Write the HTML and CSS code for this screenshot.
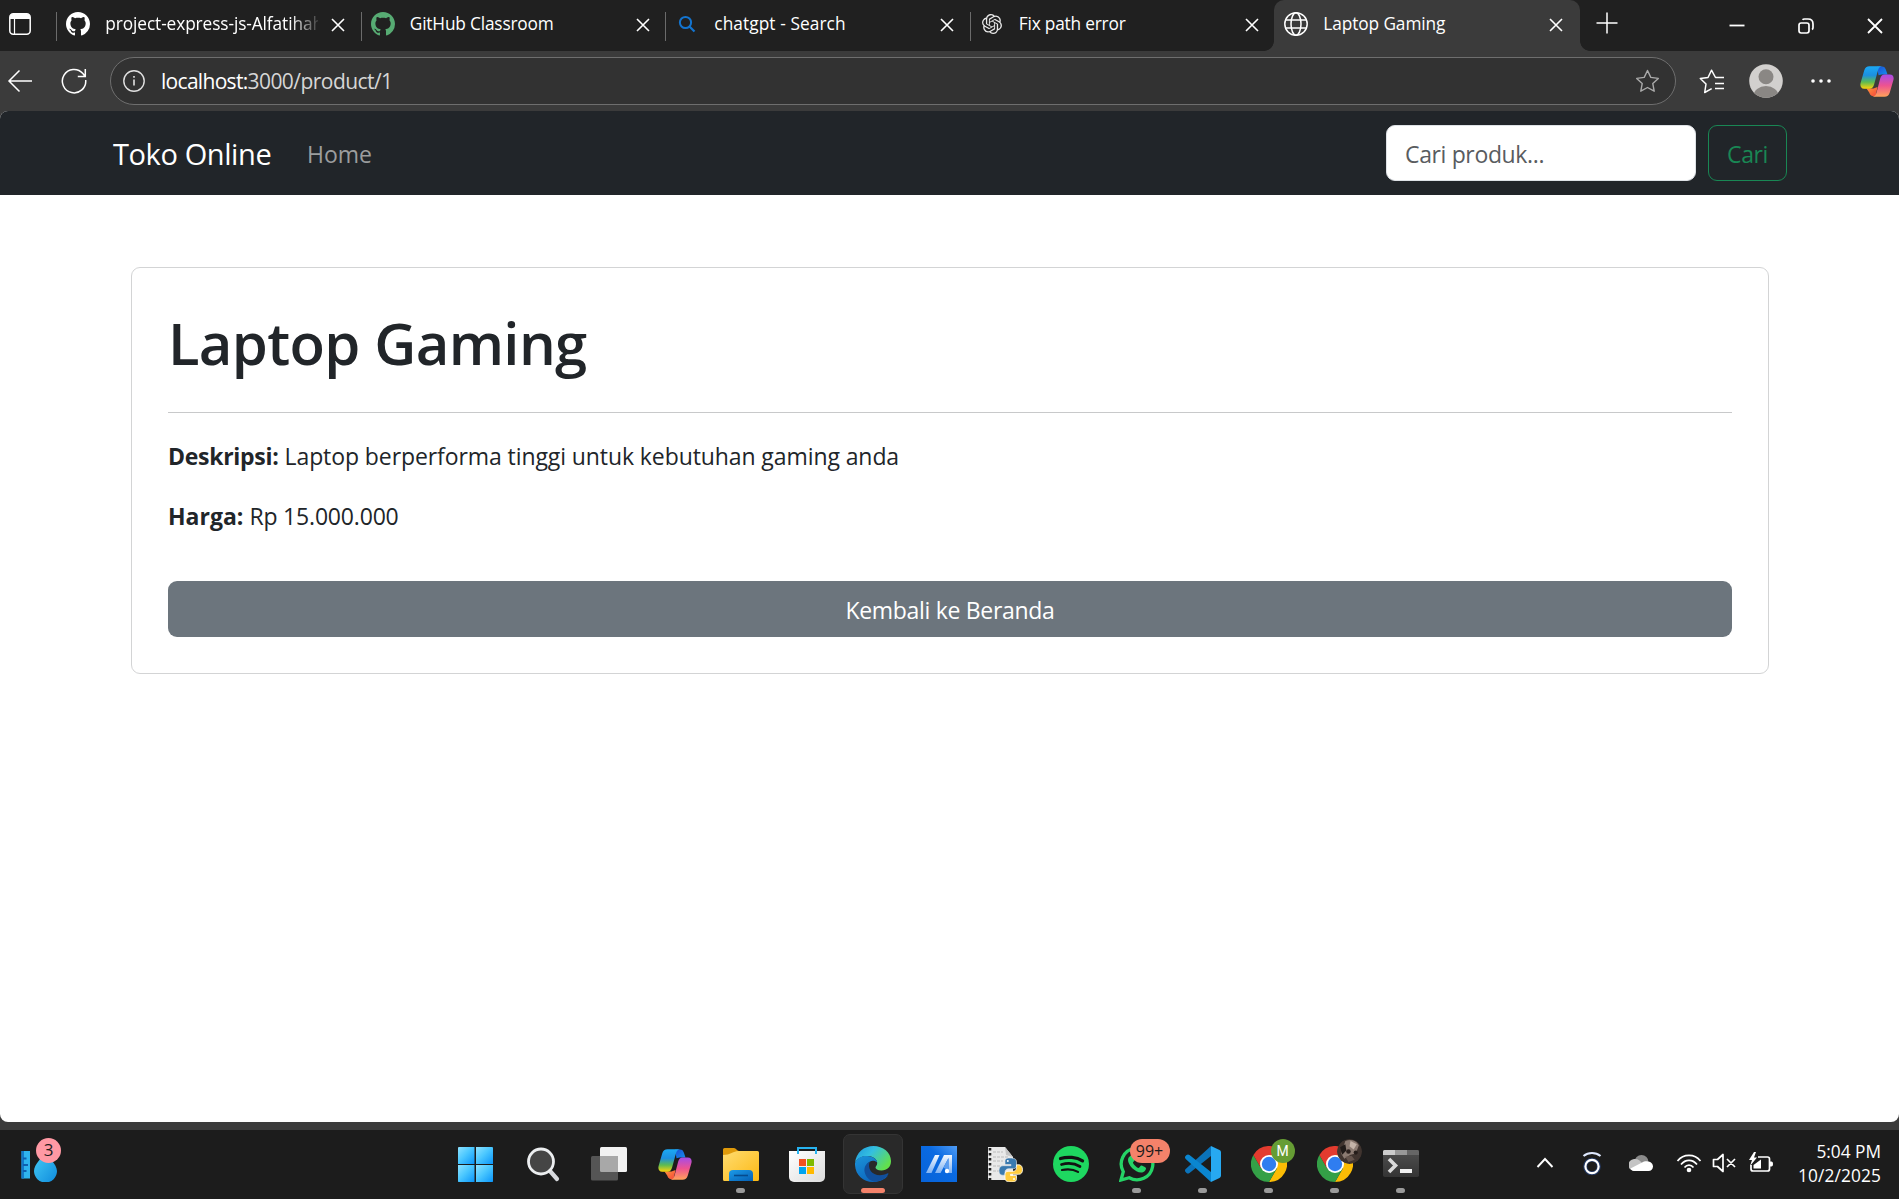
FILE: index.html
```html
<!DOCTYPE html>
<html lang="id">
<head>
<meta charset="utf-8">
<title>Laptop Gaming</title>
<link rel="stylesheet" href="styles.css">
</head>
<body>
<svg width="0" height="0" class="defs" aria-hidden="true">
  <defs>
    <symbol id="github" viewBox="0 0 16 16"><path d="M8 0C3.58 0 0 3.58 0 8c0 3.54 2.29 6.53 5.47 7.59.4.07.55-.17.55-.38 0-.19-.01-.82-.01-1.49-2.01.37-2.53-.49-2.69-.94-.09-.23-.48-.94-.82-1.13-.28-.15-.68-.52-.01-.53.63-.01 1.08.58 1.23.82.72 1.21 1.87.87 2.33.66.07-.52.28-.87.51-1.07-1.78-.2-3.64-.89-3.64-3.95 0-.87.31-1.59.82-2.15-.08-.2-.36-1.02.08-2.12 0 0 .67-.21 2.2.82.64-.18 1.32-.27 2-.27s1.36.09 2 .27c1.53-1.04 2.2-.82 2.2-.82.44 1.1.16 1.92.08 2.12.51.56.82 1.27.82 2.15 0 3.07-1.87 3.75-3.65 3.95.29.25.54.73.54 1.48 0 1.07-.01 1.93-.01 2.2 0 .21.15.46.55.38A8.01 8.01 0 0 0 16 8c0-4.42-3.58-8-8-8z" fill="currentColor"/></symbol>
    <symbol id="close" viewBox="0 0 14 14"><path d="M1 1l12 12M13 1L1 13" stroke="#fff" stroke-width="1.6" fill="none"/></symbol>
    <linearGradient id="cpA" x1="0" y1="0" x2="0" y2="1"><stop offset="0" stop-color="#1ba9f5"/><stop offset=".4" stop-color="#1c8fe0"/><stop offset=".7" stop-color="#5dbb52"/><stop offset="1" stop-color="#ffd30a"/></linearGradient>
    <linearGradient id="cpB" x1="0" y1="0" x2="0" y2="1"><stop offset="0" stop-color="#a64be8"/><stop offset=".5" stop-color="#ee5390"/><stop offset="1" stop-color="#ffa25a"/></linearGradient>
    <linearGradient id="cpC" x1="0" y1="0" x2="1" y2="1"><stop offset="0" stop-color="#1b4fd6"/><stop offset="1" stop-color="#1590ee"/></linearGradient>
    <linearGradient id="cpD" x1="0" y1="0" x2="1" y2="1"><stop offset="0" stop-color="#ff9a3c"/><stop offset="1" stop-color="#f4433c"/></linearGradient>
    <symbol id="copilot" viewBox="0 0 34 31">
      <path d="M17 .5h5c2.200 0 3.200 1.200 3.900 3.300L27.500 8.500h-6l-3 .8z" fill="url(#cpC)"/>
      <path d="M6.500 22.500h7l4-1.500-2 9.500c-3 0-5.500-1-6.300-4z" fill="url(#cpD)"/>
      <path d="M9.500.3H22c-2.400.2-3.300 1.700-4 4L14 18.800c-.9 2.900-2 4-4.600 4H4.200C1 22.800-.2 20.200.6 17L4.200 4.500C5.200 1.500 6.700.3 9.500.3z" fill="url(#cpA)"/>
      <path d="M24.500 30.700H12.500c2.300-.2 3.300-1.700 4-4L20.200 12.500c.9-2.900 2-4 4.600-4h5c3.200 0 4.400 2.400 3.600 5.600L29.800 26.500c-1 3-2.500 4.200-5.300 4.200z" fill="url(#cpB)"/>
    </symbol>
    <linearGradient id="win" x1="0" y1="0" x2="1" y2="1"><stop offset="0" stop-color="#8ee2ff"/><stop offset=".45" stop-color="#4cc8ff"/><stop offset="1" stop-color="#0a95fa"/></linearGradient>
    <linearGradient id="folder" x1="0" y1="0" x2="1" y2="1"><stop offset="0" stop-color="#ffdc70"/><stop offset="1" stop-color="#fcb914"/></linearGradient>
    <linearGradient id="dock" x1="0" y1="0" x2="1" y2="1"><stop offset="0" stop-color="#1c9be8"/><stop offset="1" stop-color="#0560b5"/></linearGradient>
    <linearGradient id="bag" x1="0" y1="0" x2="1" y2="1"><stop offset="0" stop-color="#fff"/><stop offset="1" stop-color="#dcdcdc"/></linearGradient>
    <linearGradient id="edgeTop" x1="0" y1="0" x2="1" y2=".6"><stop offset="0" stop-color="#1e96dd"/><stop offset=".45" stop-color="#34bfe0"/><stop offset="1" stop-color="#62e04c"/></linearGradient>
    <linearGradient id="edgeLeft" x1="0" y1="0" x2=".6" y2="1"><stop offset="0" stop-color="#1b93d8"/><stop offset="1" stop-color="#0c64bd"/></linearGradient>
    <linearGradient id="drop" x1="0" y1="0" x2="1" y2="1"><stop offset="0" stop-color="#45cdf7"/><stop offset="1" stop-color="#0f8bdc"/></linearGradient>
    <linearGradient id="app" x1="0" y1="1" x2="1" y2="0"><stop offset="0" stop-color="#0763d9"/><stop offset=".6" stop-color="#0a6ae2"/><stop offset="1" stop-color="#4f9cf5"/></linearGradient>
    <linearGradient id="slash" x1="0" y1="1" x2="0" y2="0"><stop offset="0" stop-color="#7fb2f3"/><stop offset="1" stop-color="#f2f8ff"/></linearGradient>
    <linearGradient id="term" x1="0" y1="0" x2="0" y2="1"><stop offset="0" stop-color="#505050"/><stop offset="1" stop-color="#343434"/></linearGradient>
    <symbol id="chrome" viewBox="0 0 36 36">
      <path d="M18 9h15.600A18 18 0 0 1 18 36l7.800-13.500z" fill="#fbbc05"/>
      <path d="M10.200 22.500L2.400 9A18 18 0 0 0 18 36l7.800-13.500z" fill="#34a047"/>
      <path d="M18 9h15.600A18 18 0 0 0 2.400 9l7.800 13.500z" fill="#e33b2e"/>
      <circle cx="18" cy="18" r="9" fill="#fff"/><circle cx="18" cy="18" r="7.200" fill="#2f7df0"/>
    </symbol>
  </defs>
</svg>

<header class="tabstrip">
  <div class="tab-actions"><svg width="22" height="22" viewBox="0 0 22 22"><rect x=".8" y=".8" width="20.400" height="20.400" rx="3.500" fill="none" stroke="#fff" stroke-width="1.500"/><path d="M1 6V4a3 3 0 0 1 3-3h14a3 3 0 0 1 3 3v2z" fill="#fff"/><path d="M5.500 6v15" stroke="#fff" stroke-width="1.200"/></svg></div>
  <div class="tab"><svg class="fav" viewBox="0 0 16 16"><use href="#github"/></svg><span class="title fade">project-express-js-Alfatihah</span><svg class="x"><use href="#close"/></svg></div>
  <div class="tab"><svg class="fav green" viewBox="0 0 16 16"><use href="#github"/></svg><span class="title t2">GitHub Classroom</span><svg class="x"><use href="#close"/></svg></div>
  <div class="tab"><svg class="fav" viewBox="0 0 24 24"><circle cx="10.500" cy="10.500" r="5.600" fill="none" stroke="#1374cf" stroke-width="2"/><path d="M14.500 14.500l5 5" stroke="#1374cf" stroke-width="2.200"/></svg><span class="title t3">chatgpt - Search</span><svg class="x"><use href="#close"/></svg></div>
  <div class="tab"><svg class="fav" viewBox="-2.400 -2.400 28.800 28.800"><path fill="#e8e8e8" d="M22.2819 9.8211a5.9847 5.9847 0 0 0-.5157-4.9108 6.0462 6.0462 0 0 0-6.5098-2.9A6.0651 6.0651 0 0 0 4.9807 4.1818a5.9847 5.9847 0 0 0-3.9977 2.9 6.0462 6.0462 0 0 0 .7427 7.0966 5.98 5.98 0 0 0 .511 4.9107 6.051 6.051 0 0 0 6.5146 2.9001A5.9847 5.9847 0 0 0 13.2599 24a6.0557 6.0557 0 0 0 5.7718-4.2058 5.9894 5.9894 0 0 0 3.9977-2.9001 6.0557 6.0557 0 0 0-.7475-7.0729zm-9.022 12.6081a4.4755 4.4755 0 0 1-2.8764-1.0408l.1419-.0804 4.7783-2.7582a.7948.7948 0 0 0 .3927-.6813v-6.7369l2.02 1.1686a.071.071 0 0 1 .038.052v5.5826a4.504 4.504 0 0 1-4.4945 4.4944zm-9.6607-4.1254a4.4708 4.4708 0 0 1-.5346-3.0137l.142.0852 4.783 2.7582a.7712.7712 0 0 0 .7806 0l5.8428-3.3685v2.3324a.0804.0804 0 0 1-.0332.0615L9.74 19.9502a4.4992 4.4992 0 0 1-6.1408-1.6464zM2.3408 7.8956a4.485 4.485 0 0 1 2.3655-1.9728V11.6a.7664.7664 0 0 0 .3879.6765l5.8144 3.3543-2.0201 1.1685a.0757.0757 0 0 1-.071 0l-4.8303-2.7865A4.504 4.504 0 0 1 2.3408 7.872zm16.5963 3.8558L13.1038 8.364 15.1192 7.2a.0757.0757 0 0 1 .071 0l4.8303 2.7913a4.4944 4.4944 0 0 1-.6765 8.1042v-5.6772a.79.79 0 0 0-.407-.667zm2.0107-3.0231l-.142-.0852-4.7735-2.7818a.7759.7759 0 0 0-.7854 0L9.409 9.2297V6.8974a.0662.0662 0 0 1 .0284-.0615l4.8303-2.7866a4.4992 4.4992 0 0 1 6.6802 4.66zM8.3065 12.863l-2.02-1.1638a.0804.0804 0 0 1-.038-.0567V6.0742a4.4992 4.4992 0 0 1 7.3757-3.4537l-.142.0805L8.704 5.459a.7948.7948 0 0 0-.3927.6813zm1.0976-2.3654l2.602-1.4998 2.6069 1.4998v2.9994l-2.5974 1.4997-2.6067-1.4997Z"/></svg><span class="title t4">Fix path error</span><svg class="x"><use href="#close"/></svg></div>
  <div class="tab active"><svg class="fav" viewBox="0 0 24 24"><g fill="none" stroke="#fff" stroke-width="1.500"><circle cx="12" cy="12" r="11.200"/><ellipse cx="12" cy="12" rx="5" ry="11.200"/><path d="M1.800 8h20.400M1.800 16h20.400"/></g></svg><span class="title t5">Laptop Gaming</span><svg class="x"><use href="#close"/></svg></div>
  <svg class="plus" width="22" height="22" viewBox="0 0 22 22"><path d="M11 .5v21M.5 11h21" stroke="#fff" stroke-width="1.500"/></svg>
  <div class="window-buttons">
    <svg width="16" height="16" viewBox="0 0 16 16"><path d="M.5 7.500h15" stroke="#fff" stroke-width="1.800"/></svg>
    <svg width="16" height="16" viewBox="0 0 16 16"><g fill="none" stroke="#fff" stroke-width="1.700"><rect x="1" y="5" width="10" height="10" rx="2.200"/><path d="M4.500 1.800C5 1.200 5.500 1 6.500 1H10c3 0 5 2 5 5v3.500c0 1-.3 1.600-1 2"/></g></svg>
    <svg width="16" height="16" viewBox="0 0 16 16"><path d="M1 1l14 14M15 1L1 15" stroke="#fff" stroke-width="1.800"/></svg>
  </div>
</header>

<div class="toolbar">
  <svg class="back" width="26" height="24" viewBox="0 0 26 24"><path d="M12.500 1.500L2 12l10.500 10.500M2 12h23" fill="none" stroke="#fff" stroke-width="1.500"/></svg>
  <svg class="reload" width="26" height="26" viewBox="0 0 26 26"><path d="M24.700 12a11.700 11.700 0 1 1-2.800-6.500L24 8.200M24.300 1v7.500h-7.500" fill="none" stroke="#fff" stroke-width="1.500"/></svg>
  <div class="address">
    <svg width="22" height="22" viewBox="0 0 22 22"><circle cx="11" cy="11" r="10.200" fill="none" stroke="#e0e0e0" stroke-width="1.400"/><path d="M11 9.500v6M11 6v1.800" stroke="#e0e0e0" stroke-width="1.600"/></svg>
    <span class="url"><b>localhost:</b><span>3000/product/1</span></span>
    <svg class="star" width="25" height="25" viewBox="0 0 25 25"><path d="M12.500 1.500l3.300 6.900 7.500 1-5.500 5.200 1.400 7.600-6.700-3.700-6.700 3.700 1.400-7.600L1.700 9.400l7.500-1z" fill="none" stroke="#aaa" stroke-width="1.400" stroke-linejoin="round"/></svg>
  </div>
  <svg class="favorites" width="26" height="25" viewBox="0 0 26 25"><path d="M25 8.500h-8.500L12.500 1.200 9 8.500l-7.700 1 5.700 5.500L5.700 23.500l7-3.800M16 14.500h9M16 19.500h9" fill="none" stroke="#fff" stroke-width="1.500" stroke-linejoin="round"/></svg>
  <svg class="avatar" width="34" height="34" viewBox="0 0 34 34"><clipPath id="avc"><circle cx="17" cy="17" r="16.800"/></clipPath><g clip-path="url(#avc)"><path d="M0 0h34v34H0z" fill="#d2d0ce"/><circle cx="17" cy="12.800" r="7.500" fill="#8a8784"/><ellipse cx="17" cy="32" rx="12.500" ry="10" fill="#8a8784"/></g></svg>
  <svg class="dots" width="20" height="6" viewBox="0 0 20 6"><g fill="#fff"><circle cx="2" cy="3" r="1.800"/><circle cx="10" cy="3" r="1.800"/><circle cx="18" cy="3" r="1.800"/></g></svg>
  <svg class="side-copilot" width="34" height="31"><use href="#copilot"/></svg>
</div>

<div class="viewport">
  <nav class="navbar">
    <a class="brand">Toko Online</a>
    <a class="nav-link">Home</a>
    <form class="search"><div class="input"><span>Cari produk...</span></div><div class="btn-search"><span>Cari</span></div></form>
  </nav>
  <main class="card">
    <h1>Laptop Gaming</h1>
    <hr>
    <p><strong class="desk">Deskripsi:</strong> <span class="desc">Laptop berperforma tinggi untuk kebutuhan gaming anda</span></p>
    <p><strong>Harga:</strong> <span class="price">Rp 15.000.000</span></p>
    <a class="btn-back">Kembali ke Beranda</a>
  </main>
</div>

<footer class="taskbar">
  <div class="widgets">
    <svg width="40" height="36" viewBox="0 0 40 36"><path d="M.5 5h8.500v27.500H.5z" fill="#2fb4ee"/><path d="M.5 5h2.500v27.500H.5z" fill="#1479c8"/><path d="M2 12.500h3.500M2 19h5M2 25h3.500" stroke="#0f5fae" stroke-width="2"/><path d="M24.500 6c2 5 11.500 12 11.500 19a11.500 11.500 0 0 1-23 0c0-7 9-14 11.500-19z" fill="url(#drop)"/></svg>
    <span class="badge-count">3</span>
  </div>
  <div class="apps">
    <div class="app start"><svg viewBox="0 0 36 36"><g fill="url(#win)"><path d="M1.500 1H17.500v17H1V1.500z"/><path d="M19 1h16.500l.5.500V18H19z"/><path d="M1 19h16.500v17h-16l-.5-.5z"/><path d="M19 19h17v16.500l-.5.500H19z"/></g></svg></div>
    <div class="app"><svg viewBox="0 0 36 36"><path d="M25 25l7 8" stroke="#d8dade" stroke-width="4.200" stroke-linecap="round"/><circle cx="16" cy="15.500" r="12.500" fill="#454545" stroke="#eceef0" stroke-width="2.800"/></svg></div>
    <div class="app"><svg viewBox="0 0 36 36"><rect x="9" y="1" width="27" height="25" rx="1.500" fill="#f2f2f2"/><rect x="0" y="10" width="27" height="24.500" rx="1.500" fill="#555"/><path d="M9 10h18v16H10.500A1.500 1.500 0 0 1 9 24.500z" fill="#a8a8a8"/></svg></div>
    <div class="app"><svg viewBox="0 0 36 36"><use href="#copilot" x="1" y="3" width="34" height="31"/></svg></div>
    <div class="app run"><svg viewBox="0 0 36 36"><path d="M0 3.500A1.500 1.500 0 0 1 1.500 2H11c2 0 3 3 5 3v6H0z" fill="#e09a0a"/><path d="M0 9c7 0 11-4 15-4h19.500A1.500 1.500 0 0 1 36 6.500v27a1.500 1.500 0 0 1-1.500 1.500h-33A1.500 1.500 0 0 1 0 33.500z" fill="url(#folder)"/><path d="M6 35v-7a4 4 0 0 1 4-4h16a4 4 0 0 1 4 4v7z" fill="url(#dock)"/><path d="M11 29.500h14" stroke="#064a8c" stroke-width="1.600"/></svg></div>
    <div class="app"><svg viewBox="0 0 36 36"><path d="M0 5h36v26a5 5 0 0 1-5 5H5a5 5 0 0 1-5-5z" fill="url(#bag)"/><path d="M9 8V2h18v6" fill="none" stroke="#27b3f0" stroke-width="2"/><path d="M10 13h7v7h-7z" fill="#f25022"/><path d="M18 13h7v7h-7z" fill="#7fba00"/><path d="M10 21h7v7h-7z" fill="#00a4ef"/><path d="M18 21h7v7h-7z" fill="#ffb900"/></svg></div>
    <div class="app current"><svg viewBox="0 0 36 36"><path d="M0 17C1 6.500 9 0 18.500 0 28 0 36 6.500 36 15c0 6-4 9.500-9.500 9.500-4 0-6-1.500-6-3 0-1.200 1.700-1.800 1.700-4.500 0-4-4.500-7-10-7C6 10 2 13 0 17z" fill="url(#edgeTop)"/><path d="M0 17C2 12 7 9.500 12.200 10c5.500.3 9.500 3 10 6.500-2-1.800-5-2.200-7.500-.8-4 2.300-4.500 7.500-1.500 12 4 6.500 13 6 20 1.500C30 33.500 24 36 18 36 7.500 36-.5 28 0 17z" fill="url(#edgeLeft)"/><path d="M14.700 15.700c-4 2-6 6-5 10.500 1.200 5 5 8.500 10 9.600C25 35.300 30 33 33.200 28.500c.5-.8 0-1.500-1-1-6.500 3-13.500 1.800-16.500-2.500-2.200-3.300-2-6.500-1-9.300z" fill="#114f9c"/></svg></div>
    <div class="app"><svg viewBox="0 0 36 36"><path d="M0 0h36v36H0z" fill="url(#app)"/><path d="M5 27h5.500l8-18H14z" fill="url(#slash)"/><path d="M14 27l9-18h8v18h-3.500V12L19.500 27z" fill="url(#slash)"/><path d="M27.500 12v13l-5-3.500z" fill="#5b9df0"/><circle cx="26" cy="25" r="2.200" fill="#fff"/></svg></div>
    <div class="app"><svg viewBox="0 0 36 36"><path d="M1 1h17l8 10v23H1z" fill="#e9e9e9"/><path d="M18 1l1 8 7 2z" fill="#c4c4c4"/><path d="M6 6h10M6 11h15M6 15h10M6 20h8M6 25h8" stroke="#bbb" stroke-dasharray="3 1"/><path d="M3 2v32" stroke="#222" stroke-width="2.600" stroke-dasharray="2.400 2.600"/><path d="M23 12c-5 0-5 2-5 4v2.500h6v1.200h-8c-3 0-4 2.500-4 5s1 4.500 3.500 4.500H18v-3c0-2 1.500-3.500 3.500-3.500h5c2 0 3-1.500 3-3V16c0-3-2-4-6.500-4z" fill="#3a7ab0" stroke="#e8e8e8" stroke-width=".6"/><path d="M24.500 36c5 0 5-2 5-4v-2.500h-6v-1.200h8c3 0 4-2 4-4.500s-1-5-3.500-5h-2.500v3c0 2-1.500 3.500-3.500 3.500h-5c-2 0-3 1.500-3 3V32c0 3 2 4 6.500 4z" fill="#ffcb3d" stroke="#fff" stroke-width=".8"/><circle cx="20.800" cy="15" r="1" fill="#fff"/><circle cx="27" cy="33" r="1" fill="#fff"/></svg></div>
    <div class="app"><svg viewBox="0 0 36 36"><circle cx="18" cy="18" r="18" fill="#1ed760"/><g fill="none" stroke="#121212" stroke-linecap="round"><path d="M7.500 12.500c7-2 16-1.500 22 2.300" stroke-width="3.300"/><path d="M8.500 18.500c6-1.600 13.500-1 18.500 2" stroke-width="2.700"/><path d="M9 24c5.500-1.200 11.500-.7 16 1.900" stroke-width="2.200"/></g></svg></div>
    <div class="app run"><svg viewBox="0 0 36 36"><path d="M2 34l2.300-8.200A15.800 15.800 0 1 1 10.200 31.700z" fill="#1c1c1c" stroke="#25d366" stroke-width="3.300"/><path d="M12.500 9.500c-1 0-3.500 1.700-3.500 4.500 0 5 7 12.500 13 12.500 3 0 5-2 5-4.500 0-.6-4.300-2.800-5-2.500-.7.300-1.600 2.600-2.500 2.400-2-.5-5-3.300-5.500-5.200-.2-.9 1.600-1.700 1.700-2.700.1-.7-1.800-4.500-3.200-4.500z" fill="#25d366"/></svg><span class="badge-chat">99+</span></div>
    <div class="app run"><svg viewBox="0 0 36 36"><path d="M26 0v10L4.500 27c-1 .8-2 .8-3 0L.6 26c-1-1-.8-2 .1-3z" fill="#0b73ba"/><path d="M26 36V26L4.500 9c-1-.8-2-.8-3 0L.6 10c-1 1-.8 2 .1 3z" fill="#0a86d0"/><path d="M26 0l8.500 4a2.500 2.500 0 0 1 1.500 2.200v23.600a2.500 2.500 0 0 1-1.500 2.200L26 36z" fill="#27a9f1"/></svg></div>
    <div class="app run"><svg viewBox="0 0 36 36"><use href="#chrome"/></svg><span class="profile">M</span></div>
    <div class="app run"><svg viewBox="0 0 36 36"><use href="#chrome"/></svg><svg class="profile photo" viewBox="0 0 24 24"><circle cx="12" cy="12" r="12" fill="#40342f"/><path d="M8 2c5-2 10-1 13 4l-3 8-5 1-6 4-3-5z" fill="#8c7b72"/><path d="M13 2l6 3-3 5-4-3z" fill="#c4b3a8"/><path d="M3 8l5-3 1 6-4 4z" fill="#211b19"/><circle cx="11" cy="12" r="2.200" fill="#2b211e"/><circle cx="18" cy="13" r="2" fill="#251d1a"/><path d="M8 17l6-1 3 4-6 2z" fill="#66554d"/></svg></div>
    <div class="app run"><svg viewBox="0 0 36 36"><rect y="4" width="36" height="27" rx="1.800" fill="url(#term)"/><path d="M0 9V5.500A1.500 1.500 0 0 1 1.500 4H12v5z" fill="#ccc"/><path d="M12 4h12v5H12z" fill="#999"/><path d="M24 4h10.500A1.500 1.500 0 0 1 36 5.500V9H24z" fill="#666"/><path d="M6 13l6.500 6.500L6 26" fill="none" stroke="#dadada" stroke-width="3.600"/><path d="M17 23h12v4H17z" fill="#f0f0f0"/></svg></div>
  </div>
  <div class="tray">
    <svg class="chev" width="18" height="12" viewBox="0 0 18 12"><path d="M1.500 10L9 2l7.500 8" fill="none" stroke="#fff" stroke-width="1.900"/></svg>
    <svg class="ring" width="20" height="24" viewBox="0 0 20 24"><circle cx="10" cy="15.500" r="6.800" fill="none" stroke="#243a66" stroke-width="4"/><circle cx="10" cy="15.500" r="6.600" fill="none" stroke="#fff" stroke-width="2.200"/><path d="M1.500 5c5-4 12-4 17 0" fill="none" stroke="#dfe9ff" stroke-width="2.200"/></svg>
    <svg class="cloud" width="24" height="18" viewBox="0 0 24 18"><circle cx="12.500" cy="8" r="7" fill="#8b8b8b"/><path d="M6 17a6 6 0 0 1-1-12c4-.5 6 1.500 8 4l4 8z" fill="#c4c4c4"/><path d="M1.500 14.500L15 7.500c6-1.500 9 2 9 5 0 2.500-2 4.500-4.500 4.500H5c-1.500 0-3-1-3.500-2.500z" fill="#fff"/></svg>
    <svg class="wifi" width="26" height="20" viewBox="0 0 26 20"><g fill="none" stroke="#fff" stroke-width="1.700"><path d="M1.500 8c6-7.500 17-7.500 23 0"/><path d="M5 11.500c4.500-5.500 11.500-5.500 16 0"/><path d="M8.500 14.500c2.500-3.200 6.500-3.200 9 0"/></g><circle cx="13" cy="17" r="2.300" fill="#fff"/></svg>
    <svg class="vol" width="25" height="20" viewBox="0 0 25 20"><path d="M1.500 6.500h4l5.500-5v17l-5.500-5h-4zM15 6l8 8M23 6l-8 8" fill="none" stroke="#fff" stroke-width="1.700" stroke-linejoin="round"/></svg>
    <svg class="bat" width="26" height="22" viewBox="0 0 26 22"><path d="M10 5h9.500a2 2 0 0 1 2 2v10a2 2 0 0 1-2 2H5a2 2 0 0 1-2-2v-4" fill="none" stroke="#fff" stroke-width="1.700"/><path d="M22 9.500c2.500 0 3 .5 3 2.500s-.5 2.500-3 2.500z" fill="#fff"/><path d="M13 7.500v9H5.500V13z" fill="#fff"/><path d="M6 0L1 8h3l-2 6 7-8.500H6L8 0z" fill="#fff"/></svg>
    <div class="clock"><span>5:04 PM</span><span class="date">10/2/2025</span></div>
  </div>
</footer>
</body>
</html>
```
FILE: styles.css
```css
* { box-sizing: border-box; }
body {
  margin: 0; width: 1899px; height: 1199px; overflow: hidden;
  display: flex; flex-direction: column;
  background: #3b3b3b; color: #212529;
  font-family: "Open Sans", "Noto Sans", sans-serif;
}
svg { display: block; flex: none; }
.defs { position: absolute; }

.tabstrip { height: 51px; flex: none; display: flex; background: #202020; }
.tab-actions { width: 56.300px; flex: none; padding: 13px 0 0 9px; }
.tab { position: relative; width: 304.500px; flex: none; display: flex; align-items: flex-start; padding-left: 10px; color: #fff; font-size: 17.300px; }
.tab:not(.active)::before { content: ""; position: absolute; left: 0; top: 12px; width: 1px; height: 29px; background: #6b6b6b; }
.fav { width: 24px; height: 24px; margin: 12px 15px 0 0; color: #fff; }
.green { color: #57ab73; }
.title { width: 213px; line-height: 24px; padding-top: 12px; white-space: nowrap; overflow: hidden; letter-spacing: -.1px; }
.t2 { letter-spacing: -.18px; }
.t3 { letter-spacing: .08px; }
.t4 { letter-spacing: -.2px; }
.fade { -webkit-mask-image: linear-gradient(90deg, #000 87%, transparent 102%); mask-image: linear-gradient(90deg, #000 87%, transparent 102%); }
.x { width: 14px; height: 14px; margin: 18px 0 0 13px; }
.active { width: 306px; background: #3b3b3b; border-radius: 10px 10px 0 0; }
.active::before, .active::after { content: ""; position: absolute; bottom: 0; width: 10px; height: 10px; }
.active::before { left: -10px; background: radial-gradient(circle at 0 0, #202020 9.500px, #3b3b3b 10.200px); }
.active::after { right: -10px; background: radial-gradient(circle at 100% 0, #202020 9.500px, #3b3b3b 10.200px); }
.plus { margin: 12px 0 0 15.500px; }
.window-buttons { margin: 17.500px 16px 0 auto; display: flex; gap: 53px; }

.toolbar { height: 60px; flex: none; display: flex; align-items: center; padding-left: 6.500px; }
.reload { margin-left: 28px; }
.address { width: 1566px; height: 48px; margin-left: 23.500px; padding: 0 15px 0 12px; display: flex; align-items: center; background: #323232; border: 1px solid #6e6e6e; border-radius: 24px; }
.url { flex: 1; margin-left: 16px; font-size: 21px; color: #d6d6d6; letter-spacing: -.55px; }
.url b { font-weight: 400; color: #fff; letter-spacing: -.7px; }
.favorites { margin-left: 23px; }
.avatar { margin-left: 24px; }
.dots { margin-left: 28px; }
.side-copilot { margin-left: 29px; }

.viewport { height: 1011px; flex: none; background: #fff; border-radius: 8px; overflow: hidden; }
.navbar { height: 84px; background: #212529; padding: 14px 112px 14px 113px; display: flex; }
.brand { font-size: 29px; line-height: 57px; color: #fff; white-space: nowrap; width: 194px; letter-spacing: -.4px; }
.nav-link { font-size: 23px; line-height: 59px; color: #9b9d9e; }
.search { margin: 0 0 0 auto; display: flex; gap: 12px; font-size: 23px; line-height: 56px; white-space: nowrap; letter-spacing: -.36px; }
.input { width: 310px; height: 56px; padding-left: 18px; background: #fff; border: 1px solid #dee2e6; border-radius: 9px; color: #595c5f; }
.btn-search { width: 79px; height: 56px; padding-left: 18px; border: 1px solid #198754; border-radius: 9px; color: #198754; }
.card { width: 1638px; height: 407px; margin: 72px 0 0 131px; padding: 36px; border: 1px solid #d3d4d5; border-radius: 9px; font-size: 23px; }
h1 { margin: 0; font-size: 58px; font-weight: 600; line-height: 78px; padding-bottom: 2px; white-space: nowrap; letter-spacing: -.65px; }
hr { margin: 28px 0 25px; border: 0; border-top: 1px solid #c8c9ca; }
p { margin: 0 0 24px; line-height: 36px; white-space: nowrap; }
.desk { letter-spacing: -.28px; }
.desc { letter-spacing: -.09px; }
.price { letter-spacing: -.18px; }
.btn-back { display: block; height: 56px; margin-top: 47px; border-radius: 9px; background: #6c757d; color: #fff; text-align: center; line-height: 59px; letter-spacing: -.3px; }

.taskbar { height: 69px; margin-top: 8px; flex: none; display: flex; background: #1c1c1c; color: #fff; }
.widgets { position: relative; width: 443.500px; padding: 16px 0 0 20.500px; }
.badge-count { position: absolute; left: 36px; top: 8px; width: 25px; height: 25px; border-radius: 50%; background: #ff99a4; color: #1c1c1c; text-align: center; font-size: 17px; line-height: 24px; }
.apps { display: flex; }
.app { position: relative; width: 66px; padding: 16px 15px 0; }
.app > svg { width: 36px; height: 36px; }
.start > svg { margin-left: -1.500px; }
.run::after { content: ""; position: absolute; left: 28.500px; top: 58px; width: 9px; height: 5px; border-radius: 3px; background: #9a9a9a; }
.current { width: 60px; height: 60px; margin: 4px 3px 0; padding: 12px; background: #292929; border: 1px solid #343434; border-radius: 7px; }
.current > svg { margin: -1px; }
.current::after { content: ""; position: absolute; left: 17px; bottom: 0; width: 24px; height: 5px; border-radius: 3px; background: #f4826a; }
.badge-chat { position: absolute; left: 26px; top: 9px; width: 40px; height: 24px; border-radius: 12px; background: #f4826a; color: #1c1c1c; font-size: 16px; line-height: 24px; text-align: center; }
.profile { position: absolute; left: 35px; top: 9px; width: 24px; height: 24px; border-radius: 50%; background: #669d34; color: #fff; font: 14px/24px Roboto, sans-serif; text-align: center; }
.app > .photo { width: 25px; height: 25px; background: none; }
.tray { margin-left: auto; display: flex; align-items: center; padding-right: 18px; height: 66px; }
.ring { margin-left: 28px; }
.cloud { margin-left: 27px; }
.wifi { margin-left: 23px; }
.vol { margin-left: 10px; }
.bat { margin-left: 11px; }
.clock { width: 107px; padding-top: 2px; display: flex; flex-direction: column; align-items: flex-end; font-size: 17.300px; line-height: 24px; }
.date { letter-spacing: .12px; }
```
